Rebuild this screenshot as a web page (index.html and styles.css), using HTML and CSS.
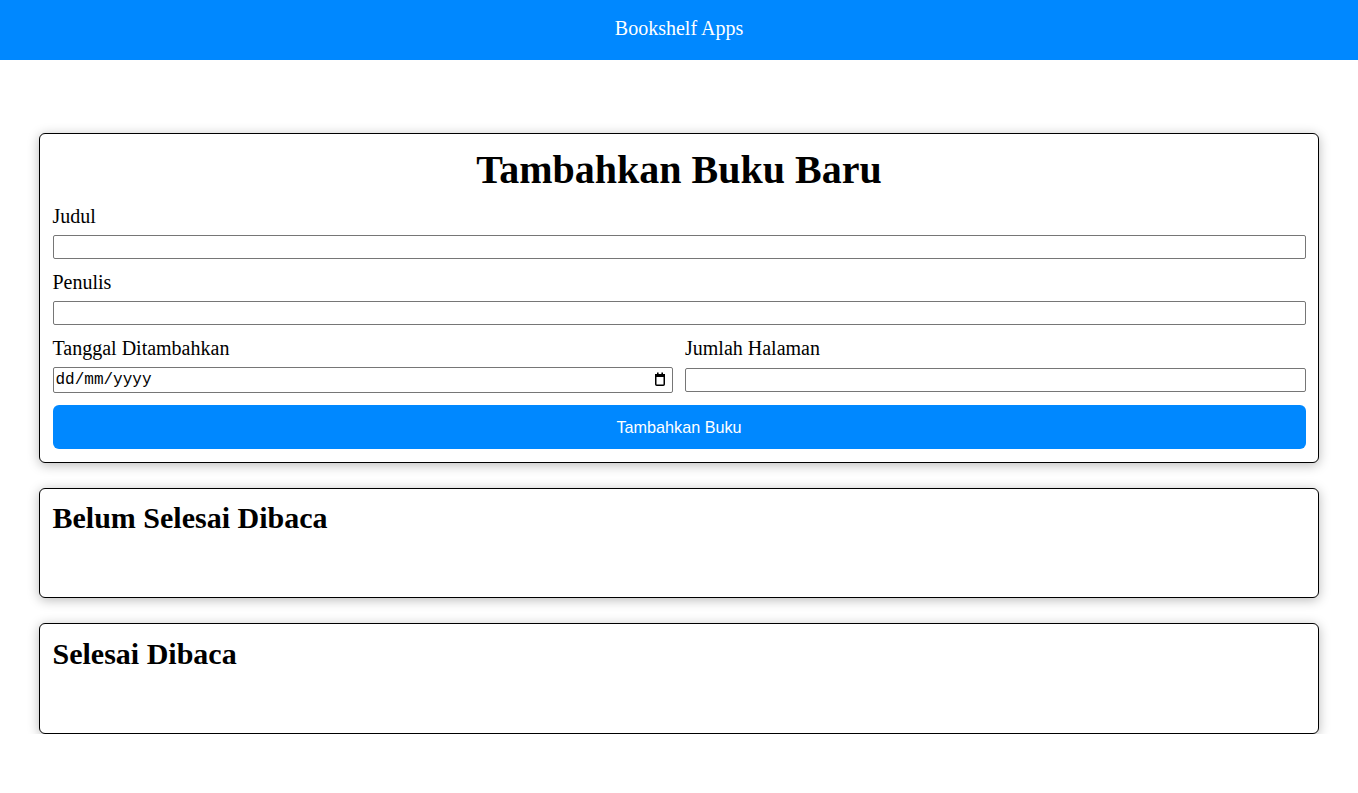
FILE: index.html
```html
<!DOCTYPE html>
<html lang="id">
<head>
<meta charset="utf-8">
<title>Bookshelf Apps</title>
<link rel="stylesheet" href="styles.css">
</head>
<body>
<header class="head-bar">
  <h1 class="head-title">Bookshelf Apps</h1>
</header>
<main class="main">
  <section class="card input-section">
    <h2 class="form-title">Tambahkan Buku Baru</h2>
    <form class="form">
      <div class="field">
        <label class="label" for="inputBookTitle">Judul</label>
        <input class="input" id="inputBookTitle" type="text">
      </div>
      <div class="field">
        <label class="label" for="inputBookAuthor">Penulis</label>
        <input class="input" id="inputBookAuthor" type="text">
      </div>
      <div class="row">
        <div class="field">
          <label class="label" for="inputBookYear">Tanggal Ditambahkan</label>
          <div class="date-field">
            <input class="input date-input" id="inputBookYear" type="text" placeholder="dd/mm/yyyy">
            <svg class="cal-icon" width="12" height="14" viewBox="0 0 12 14" aria-hidden="true">
              <rect x="1.75" y="2.75" width="8.5" height="10.5" rx="1" fill="none" stroke="#000" stroke-width="1.5"/>
              <rect x="1" y="2" width="10" height="3" fill="#000"/>
              <rect x="3" y="0.5" width="1.6" height="2" fill="#000"/>
              <rect x="7.4" y="0.5" width="1.6" height="2" fill="#000"/>
            </svg>
          </div>
        </div>
        <div class="field">
          <label class="label" for="inputBookPages">Jumlah Halaman</label>
          <input class="input num-input" id="inputBookPages" type="text">
        </div>
      </div>
      <button class="btn" type="button">Tambahkan Buku</button>
    </form>
  </section>
  <section class="card shelf">
    <h2 class="shelf-title">Belum Selesai Dibaca</h2>
    <div class="book-list"></div>
  </section>
  <section class="card shelf">
    <h2 class="shelf-title">Selesai Dibaca</h2>
    <div class="book-list"></div>
  </section>
</main>
</body>
</html>
```
FILE: styles.css
```css
* {
  box-sizing: border-box;
}

html, body {
  margin: 0;
  padding: 0;
  background: #ffffff;
}

body {
  font-family: "Liberation Serif", "Times New Roman", serif;
  color: #000;
}

.head-bar {
  height: 60px;
  background: #0088ff;
  padding-top: 17px;
}

.head-title {
  margin: 0;
  font-size: 20px;
  line-height: 23px;
  font-weight: normal;
  color: #fff;
  text-align: center;
}

.main {
  max-width: 1280px;
  margin: 73px auto 0;
  display: flex;
  flex-direction: column;
  gap: 25px;
}

.card {
  border: 1px solid #000;
  border-radius: 6px;
  padding: 12.5px;
  background: #fff;
  box-shadow: 0 2px 12px rgba(0, 0, 0, 0.28);
}

.form-title {
  margin: 0 0 12.5px;
  font-size: 40px;
  line-height: 46px;
  font-weight: bold;
  text-align: center;
}

.form {
  display: flex;
  flex-direction: column;
  gap: 12px;
}

.field {
  display: flex;
  flex-direction: column;
}

.label {
  font-size: 20px;
  line-height: 23px;
  margin-bottom: 7px;
}

.input {
  width: 100%;
  height: 24px;
  border: 1px solid #767676;
  border-radius: 2px;
  padding: 1px 3px;
  font-family: "Liberation Sans", Arial, sans-serif;
  font-size: 16px;
  background: #fff;
  outline: none;
}

.row {
  display: grid;
  grid-template-columns: 1fr 1fr;
  gap: 12px;
}

.date-field {
  position: relative;
}

.date-input {
  height: 26px;
  font-family: "Liberation Mono", "DejaVu Sans Mono", monospace;
  font-size: 16px;
  padding: 1px 2px;
}

.date-input::placeholder {
  color: #000;
  opacity: 1;
}

.cal-icon {
  position: absolute;
  right: 7px;
  top: 5px;
}

.num-input {
  margin-top: 0.5px;
}

.btn {
  height: 44px;
  border: 0;
  border-radius: 6px;
  background: #0088ff;
  color: #fff;
  font-family: "Liberation Sans", Arial, sans-serif;
  font-size: 16.2px;
  cursor: pointer;
}

.shelf-title {
  margin: 0 0 24px;
  font-size: 30px;
  line-height: 34.5px;
  font-weight: bold;
}

.book-list {
  min-height: 25px;
}
```
